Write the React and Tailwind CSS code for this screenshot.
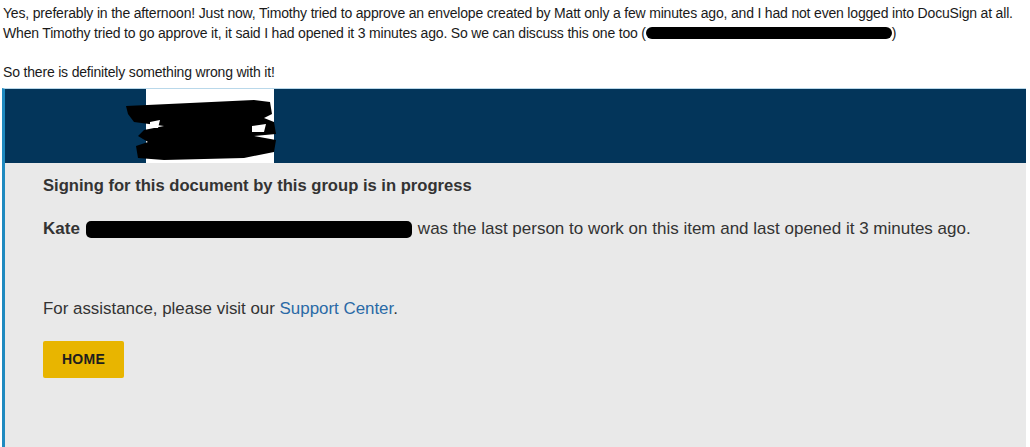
import React from "react";

const Redact = ({ className }) => (
  <span className={"inline-block bg-black align-middle " + className} />
);

export default function App() {
  return (
    <div className="w-[1030px] h-[447px] bg-white overflow-hidden">
      {/* email text */}
      <div className="pl-[3px] pt-[4px] text-[14px] leading-[19.5px] text-[#1a1a1a] font-['Liberation_Sans',Arial,sans-serif] tracking-[-0.18px]">
        <p>
          Yes, preferably in the afternoon! Just now, Timothy tried to approve an envelope created by Matt only a few minutes ago, and I had not even logged into DocuSign at all.
        </p>
        <p>
          When Timothy tried to go approve it, it said I had opened it 3 minutes ago. So we can discuss this one too (
          <Redact className="w-[246px] h-[12px] rounded-[6px] -mt-[2px]" />)
        </p>
        <p>&nbsp;</p>
        <p>So there is definitely something wrong with it!</p>
      </div>

      {/* screenshot frame */}
      <div className="mt-[6px] ml-[2px] w-[1024px] h-[360px] border-l-[3px] border-t border-l-[#1f8ac0] border-t-[#b9d8ea] flex flex-col">
        <div className="h-[74px] bg-[#03355a] flex shrink-0">
          <div className="ml-[141px] w-[128px] h-full bg-white relative">
            <svg className="absolute -left-[22px] top-[7px]" width="162" height="66" viewBox="0 0 162 66">
              <path
                d="M2 10 L130 4 L146 6 L148 18 L140 22 L150 26 L152 38 L130 40 L152 44 L150 56 L120 62 L40 64 L14 62 L12 50 L24 46 L14 40 L20 34 L40 30 L10 26 L4 18 Z"
                fill="#000"
              />
              <path d="M26 26 L36 24 L34 32 L26 32 Z" fill="#fff" />
              <path d="M128 30 L142 28 L140 36 L128 36 Z" fill="#fff" />
            </svg>
          </div>
        </div>
        <div className="flex-1 bg-[#e9e9e9] pl-[38px] pt-[13px] font-['Liberation_Sans',Arial,sans-serif] text-[#333333]">
          <h2 className="text-[16.6px] leading-[20px] font-bold">
            Signing for this document by this group is in progress
          </h2>
          <p className="mt-[23px] text-[17px] leading-[20px] flex items-center">
            <span className="font-bold">Kate</span>
            <Redact className="ml-[6px] w-[326px] h-[17px] rounded-[5px]" />
            <span className="ml-[6px]">was the last person to work on this item and last opened it 3 minutes ago.</span>
          </p>
          <p className="mt-[60px] text-[16.9px] leading-[20px]">
            For assistance, please visit our <span className="text-[#2a6aa6]">Support Center</span>.
          </p>
          <button className="mt-[22px] w-[81px] h-[37px] bg-[#e8b500] rounded-[2px] text-[14px] font-bold text-[#1e1e1e] tracking-[0.3px]">
            HOME
          </button>
        </div>
      </div>
    </div>
  );
}
